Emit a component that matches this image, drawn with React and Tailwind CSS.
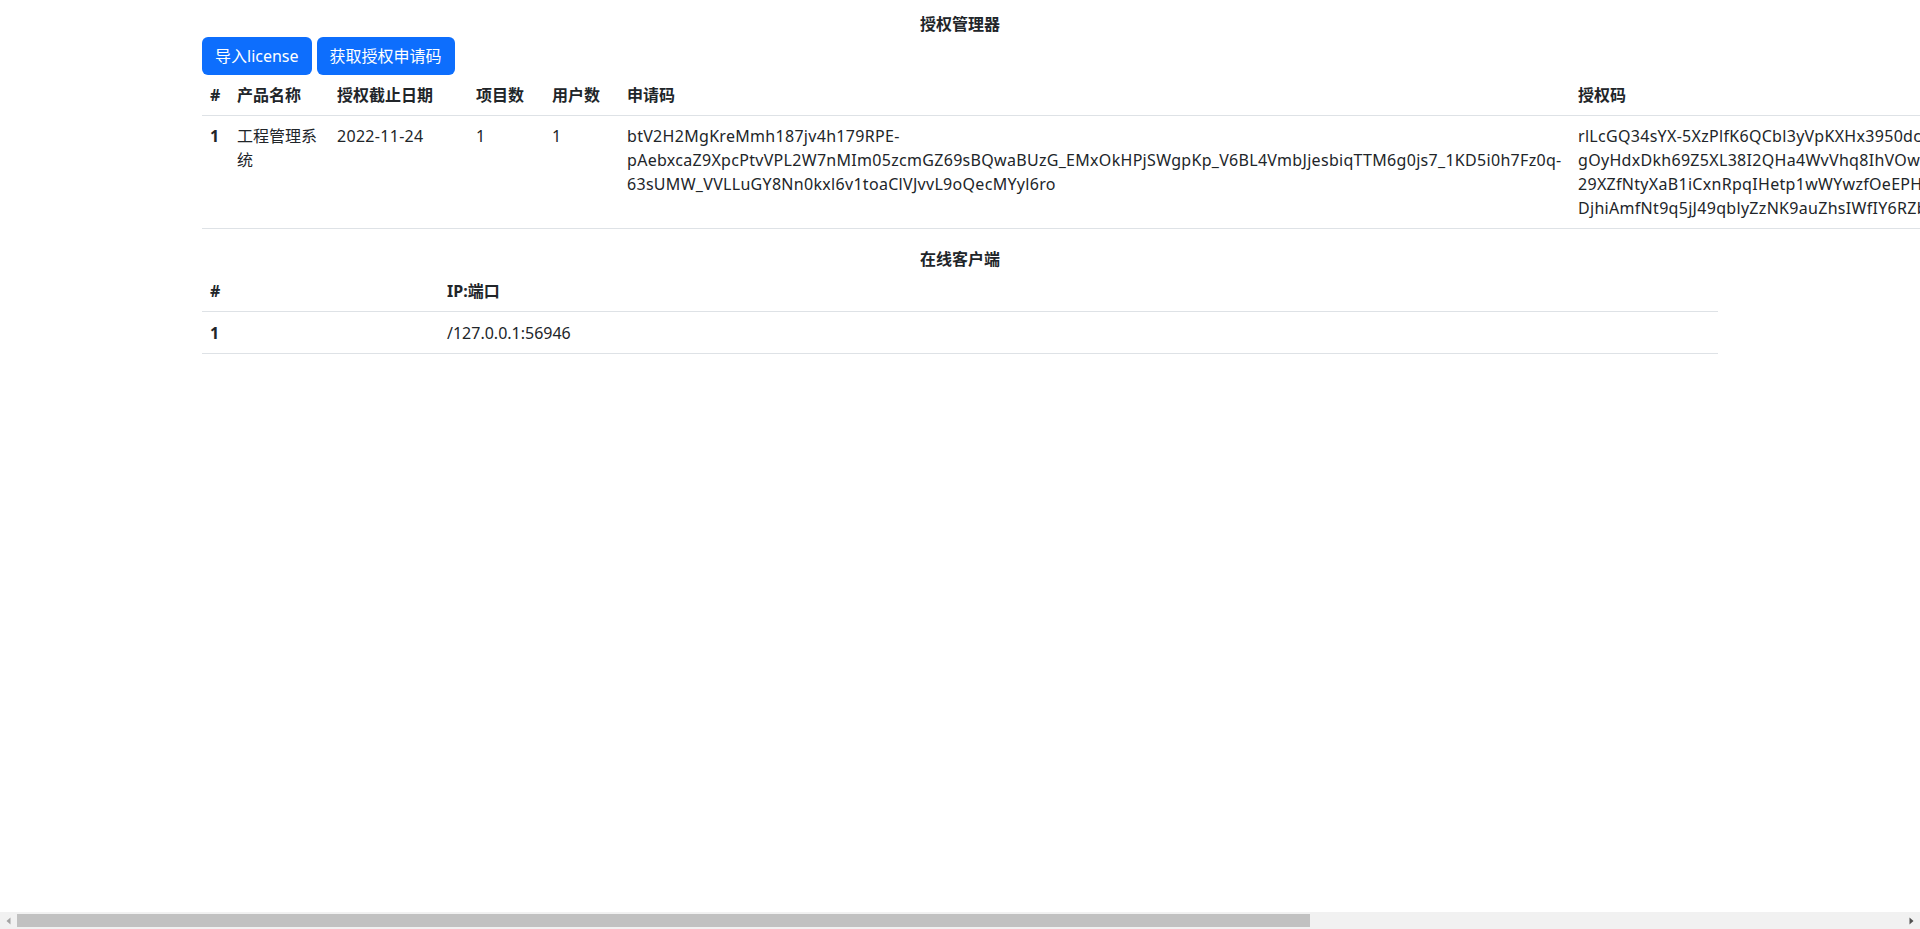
const LICENSES = [
  {
    id: 1,
    product: '工程管理系统',
    expire: '2022-11-24',
    projects: 1,
    users: 1,
    requestCode: [
      'btV2H2MgKreMmh187jv4h179RPE-',
      'pAebxcaZ9XpcPtvVPL2W7nMIm05zcmGZ69sBQwaBUzG_EMxOkHPjSWgpKp_V6BL4VmbJjesbiqTTM6g0js7_1KD5i0h7Fz0q-',
      '63sUMW_VVLLuGY8Nn0kxl6v1toaClVJvvL9oQecMYyl6ro',
    ],
    licenseCode: [
      'rlLcGQ34sYX-5XzPlfK6QCbl3yVpKXHx3950dcWq7T',
      'gOyHdxDkh69Z5XL38I2QHa4WvVhq8IhVOwR3kYp2',
      '29XZfNtyXaB1iCxnRpqIHetp1wWYwzfOeEPHsL0q8',
      'DjhiAmfNt9q5jJ49qblyZzNK9auZhsIWfIY6RZbT3m',
    ],
  },
];

const CLIENTS = [{ id: 1, addr: '/127.0.0.1:56946' }];

function ScrollArrow({ dir, color }) {
  return (
    <svg width="5" height="8" viewBox="0 0 5 8" className="block">
      {dir === 'left' ? (
        <path d="M4.5 0.5 L0.5 4 L4.5 7.5 Z" fill={color} />
      ) : (
        <path d="M0.5 0.5 L4.5 4 L0.5 7.5 Z" fill={color} />
      )}
    </svg>
  );
}

export default function App() {
  return (
    <div className="h-[929px] w-full flex flex-col overflow-hidden bg-white text-[#212529] text-base leading-6 font-['Noto_Sans','Noto_Sans_CJK_SC',sans-serif]">
      <div className="flex-1 overflow-hidden">
        <div className="w-[1516px] mx-auto pt-3">
          <div className="text-center font-bold">授权管理器</div>

          <div className="flex gap-[5px] mt-px">
            <button className="h-[38px] px-[13px] rounded-[6px] bg-[#0d6efd] text-white">导入license</button>
            <button className="h-[38px] px-[13px] rounded-[6px] bg-[#0d6efd] text-white">获取授权申请码</button>
          </div>

          <table className="table-fixed border-collapse w-[2598px] text-left">
            <thead>
              <tr className="border-b border-[#dee2e6]">
                <th className="w-[27px] px-2 py-2 font-bold">#</th>
                <th className="w-[100px] px-2 py-2 font-bold">产品名称</th>
                <th className="w-[139px] px-2 py-2 font-bold">授权截止日期</th>
                <th className="w-[76px] px-2 py-2 font-bold">项目数</th>
                <th className="w-[75px] px-2 py-2 font-bold">用户数</th>
                <th className="w-[951px] px-2 py-2 font-bold">申请码</th>
                <th className="w-[1230px] px-2 py-2 font-bold">授权码</th>
              </tr>
            </thead>
            <tbody>
              {LICENSES.map((lic) => (
                <tr key={lic.id} className="border-b border-[#dee2e6] align-top">
                  <th className="px-2 py-2 font-bold">{lic.id}</th>
                  <td className="px-2 py-2">{lic.product}</td>
                  <td className="px-2 py-2 tracking-[0.3px]">{lic.expire}</td>
                  <td className="px-2 py-2">{lic.projects}</td>
                  <td className="px-2 py-2">{lic.users}</td>
                  <td className="px-2 py-2 whitespace-nowrap tracking-[0.3px]">
                    {lic.requestCode.map((line) => (
                      <div key={line}>{line}</div>
                    ))}
                  </td>
                  <td className="px-2 py-2 whitespace-nowrap tracking-[0.3px]">
                    {lic.licenseCode.map((line) => (
                      <div key={line}>{line}</div>
                    ))}
                  </td>
                </tr>
              ))}
            </tbody>
          </table>

          <div className="text-center font-bold mt-[18px]">在线客户端</div>

          <table className="table-fixed border-collapse w-full text-left">
            <thead>
              <tr className="border-b border-[#dee2e6]">
                <th className="w-[237px] px-2 py-2 font-bold">#</th>
                <th className="px-2 py-2 font-bold">IP:端口</th>
              </tr>
            </thead>
            <tbody>
              {CLIENTS.map((c) => (
                <tr key={c.id} className="border-b border-[#dee2e6]">
                  <th className="px-2 py-2 font-bold">{c.id}</th>
                  <td className="px-2 pt-[9px] pb-2">{c.addr}</td>
                </tr>
              ))}
            </tbody>
          </table>
        </div>
      </div>

      {/* horizontal scrollbar */}
      <div className="h-[17px] shrink-0 flex bg-[#f1f1f1]">
        <div className="w-[17px] h-full flex items-center justify-center">
          <ScrollArrow dir="left" color="#a3a3a3" />
        </div>
        <div className="flex-1 h-full py-[2px]">
          <div className="h-full w-[1293px] bg-[#c1c1c1]" />
        </div>
        <div className="w-[17px] h-full flex items-center justify-center">
          <ScrollArrow dir="right" color="#505050" />
        </div>
      </div>
    </div>
  );
}
